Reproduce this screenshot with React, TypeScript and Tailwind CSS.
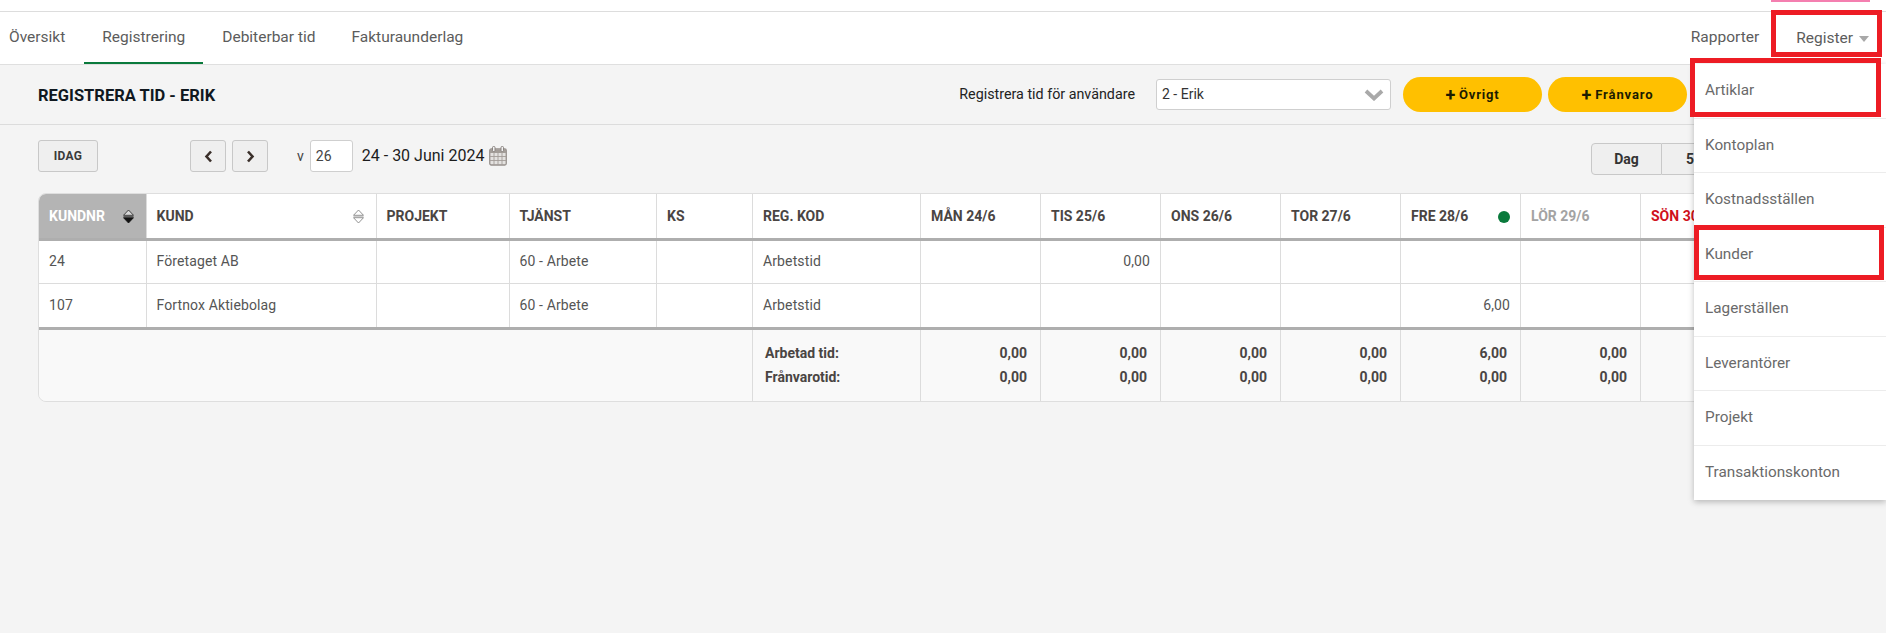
import React from "react";

const roboto = "font-['Roboto',sans-serif]";

function Sort({ active }: { active?: boolean }) {
  return (
    <svg width="11" height="15" viewBox="0 0 11 15" className="shrink-0">
      <path d="M5.5 1 L10.5 6.3 H0.5 Z" fill={active ? "#d8d8d8" : "#fff"} stroke={active ? "#222" : "#777"} strokeWidth="0.8" />
      <path d="M0.5 7.5 H10.5" stroke={active ? "#222" : "#aaa"} strokeWidth="0.6" />
      <path d="M5.5 14 L10.5 8.7 H0.5 Z" fill={active ? "#111" : "#fff"} stroke={active ? "#111" : "#777"} strokeWidth="0.8" />
    </svg>
  );
}

function Chevron({ dir }: { dir: "l" | "r" }) {
  return (
    <svg width="9" height="13" viewBox="0 0 9 13">
      <path d={dir === "l" ? "M7 1.5 L2.5 6.5 L7 11.5" : "M2 1.5 L6.5 6.5 L2 11.5"} fill="none" stroke="#3a2f2a" strokeWidth="2.6" />
    </svg>
  );
}

function Calendar() {
  return (
    <svg width="18" height="20" viewBox="0 0 18 20" className="ml-[5px]">
      <rect x="0.75" y="3" width="16.5" height="16" rx="1.5" fill="#e4e2e0" stroke="#96908c" strokeWidth="1.3" />
      <path d="M1 3.5H17V7H1Z" fill="#a39d98" />
      <path d="M1 10.5H17M1 14.5H17M5 7V19M9 7V19M13 7V19" stroke="#a39d98" strokeWidth="0.9" />
      <rect x="3.5" y="0.5" width="2.5" height="5" rx="1" fill="#f2f2f2" stroke="#8a8480" />
      <rect x="12" y="0.5" width="2.5" height="5" rx="1" fill="#f2f2f2" stroke="#8a8480" />
    </svg>
  );
}

const widths = [107, 230, 133, 147.5, 96, 168, 120, 120, 120, 120, 120, 120, 120, 88];

type Head = { t: string; c?: string };
const heads: Head[] = [
  { t: "REG. KOD" },
  { t: "MÅN 24/6" },
  { t: "TIS 25/6" },
  { t: "ONS 26/6" },
  { t: "TOR 27/6" },
  { t: "FRE 28/6" },
  { t: "LÖR 29/6", c: "text-[#a3a3a3]" },
  { t: "SÖN 30/6", c: "text-[#d0111b]" },
  { t: "" },
];

const th = "border-r border-[#dcdcdc] pl-[10px] pr-[10px] pt-[2px] text-left text-[14px] font-bold text-[#4a4543] font-['Roboto',sans-serif]";
const td = "border-r border-[#dcdcdc] px-[10px] text-[14px] tracking-[0.12px] text-[#555] font-normal";

const rows = [
  { nr: "24", kund: "Företaget AB", h: "h-[44px] border-b border-[#dcdcdc]", vals: ["", "0,00", "", "", "", "", "", ""] },
  { nr: "107", kund: "Fortnox Aktiebolag", h: "h-[45px]", vals: ["", "", "", "", "6,00", "", "", ""] },
];

const totals = [
  ["0,00", "0,00"],
  ["0,00", "0,00"],
  ["0,00", "0,00"],
  ["0,00", "0,00"],
  ["6,00", "0,00"],
  ["0,00", "0,00"],
  ["0,00", "0,00"],
  ["0,00", "0,00"],
];

const menu = ["Artiklar", "Kontoplan", "Kostnadsställen", "Kunder", "Lagerställen", "Leverantörer", "Projekt", "Transaktionskonton"];

export default function App() {
  return (
    <div className={`relative h-[633px] w-[1886px] overflow-hidden bg-[#f4f4f4] ${roboto}`}>
      {/* top strip */}
      <div className="h-[12px] border-b border-[#dddddd] bg-white" />

      {/* nav */}
      <div className="flex h-[53px] items-center justify-between border-b border-[#dfdfdf] bg-white pr-[17px] text-[15.5px] text-[#5c5c5c]">
        <div className="flex h-full items-stretch">
          <div className="flex items-center pl-[9px] pr-[19px]">Översikt</div>
          <div className="flex w-[119px] items-center justify-center border-b-2 border-[#0a7a3c] pt-[2px]">Registrering</div>
          <div className="flex items-center pl-[19px] pr-[18px]">Debiterbar tid</div>
          <div className="flex items-center pl-[18px]">Fakturaunderlag</div>
        </div>
        <div className="flex items-center">
          <span className="mr-[37px]">Rapporter</span>
          <span className="flex items-center gap-[6px] pt-[1px]">
            Register
            <span className="h-0 w-0 border-x-[5px] border-t-[6px] border-x-transparent border-t-[#a8a8a8]" />
          </span>
        </div>
      </div>

      {/* title bar */}
      <div className="flex h-[60px] items-center justify-between border-b border-[#dcdcdc] pl-[38px]">
        <h1 className="pt-[3px] text-[16.5px] font-bold text-[#10181f]">REGISTRERA TID - ERIK</h1>
        <div className="mr-[199px] flex items-center">
          <span className="mr-[21px] text-[14.3px] text-[#222]">Registrera tid för användare</span>
          <div className="mr-[12px] flex h-[31px] w-[235px] items-center justify-between rounded-[3px] border border-[#cfcfcf] bg-white pl-[5px] pr-[6px] text-[14px] text-[#333]">
            <span>2 - Erik</span>
            <svg width="20" height="12" viewBox="0 0 20 12">
              <path d="M2 2 L10 9.5 L18 2" fill="none" stroke="#a9a9a9" strokeWidth="3.8" />
            </svg>
          </div>
          <button className="mr-[6px] flex h-[35px] w-[139px] items-center justify-center gap-[3px] rounded-full bg-[#ffc000] text-[13px] font-bold tracking-[0.8px] text-[#1c1c00]">
            <span className="text-[18px] leading-none">+</span>Övrigt
          </button>
          <button className="flex h-[35px] w-[139px] items-center justify-center gap-[3px] rounded-full bg-[#ffc000] text-[13px] font-bold tracking-[0.9px] text-[#1c1c00]">
            <span className="text-[18px] leading-none">+</span>Frånvaro
          </button>
        </div>
      </div>

      {/* toolbar */}
      <div className="flex h-[68px] items-start justify-between pl-[38px] pt-[15px]">
        <div className="flex items-center">
          <button className="mr-[92px] h-[32px] w-[60px] rounded-[3px] border border-[#c8c8c8] bg-[#efefef] text-[12px] font-bold tracking-[0.3px] text-[#3a3a3a]">IDAG</button>
          <button className="mr-[6px] flex h-[32px] w-[36px] items-center justify-center rounded-[3px] border border-[#c8c8c8] bg-[#efefef]"><Chevron dir="l" /></button>
          <button className="mr-[29px] flex h-[32px] w-[36px] items-center justify-center rounded-[3px] border border-[#c8c8c8] bg-[#efefef]"><Chevron dir="r" /></button>
          <span className="mr-[6px] text-[14px] text-[#444]">v</span>
          <div className="mr-[9px] flex h-[32px] w-[43px] items-center rounded-[3px] border border-[#cfcfcf] bg-white pl-[5px] text-[14px] text-[#444]">26</div>
          <span className="text-[16px] text-[#1c1c1c]">24 - 30 Juni 2024</span>
          <Calendar />
        </div>
        <div className="mt-[3px] flex h-[32px]">
          <button className="h-full w-[71px] rounded-l-[4px] border border-[#c8c8c8] bg-[#efefef] text-[14px] font-bold text-[#333]">Dag</button>
          <button className="h-full w-[224px] border-y border-r border-[#c8c8c8] bg-[#efefef] pl-[24px] text-left text-[14px] font-bold text-[#333]">5 dagar</button>
        </div>
      </div>

      {/* table */}
      <div className="ml-[38px] w-[1810px] overflow-hidden rounded-[8px] border-x border-y border-[#dedede]">
        <table className="w-[1808px] table-fixed border-collapse">
          <colgroup>
            {widths.map((w, i) => (
              <col key={i} style={{ width: w }} />
            ))}
          </colgroup>
          <thead>
            <tr className="h-[45px] border-b-[3px] border-[#aeaeae] bg-white">
              <th className={`${th} bg-[#b4b4b4] !text-white`}>
                <div className="flex items-center justify-between pr-[2px]">KUNDNR<Sort active /></div>
              </th>
              <th className={th}>
                <div className="flex items-center justify-between pr-[2px]">KUND<Sort /></div>
              </th>
              <th className={th}>PROJEKT</th>
              <th className={th}>TJÄNST</th>
              <th className={th}>KS</th>
              {heads.map((h, i) => (
                <th key={i} className={`${th} ${h.c ?? ""}`}>
                  {h.t === "FRE 28/6" ? (
                    <div className="flex items-center justify-between">
                      {h.t}
                      <span className="h-[12px] w-[12px] rounded-full bg-[#0a7a3c]" />
                    </div>
                  ) : (
                    h.t
                  )}
                </th>
              ))}
            </tr>
          </thead>
          <tbody>
            {rows.map((r) => (
              <tr key={r.nr} className={`${r.h} bg-white`}>
                <td className={td}>{r.nr}</td>
                <td className={td}>{r.kund}</td>
                <td className={td} />
                <td className={td}>60 - Arbete</td>
                <td className={td} />
                <td className={td}>Arbetstid</td>
                {r.vals.map((v, i) => (
                  <td key={i} className={`${td} text-right`}>{v}</td>
                ))}
                <td className={td} />
              </tr>
            ))}
            <tr className="h-[73px] border-t-[3px] border-[#aeaeae] bg-[#f9f9f9]">
              <td colSpan={5} className="border-r border-[#dcdcdc]" />
              <td className="border-r border-[#dcdcdc] pl-[12px] text-[14px] font-bold leading-[24px] text-[#4a4543]">
                <div>Arbetad tid:</div>
                <div>Frånvarotid:</div>
              </td>
              {totals.map((t, i) => (
                <td key={i} className="border-r border-[#dcdcdc] pr-[13px] text-right text-[14px] font-bold leading-[24px] text-[#4a4543]">
                  <div>{t[0]}</div>
                  <div>{t[1]}</div>
                </td>
              ))}
              <td />
            </tr>
          </tbody>
        </table>
      </div>

      {/* dropdown menu */}
      <div className="absolute left-[1694px] top-[64px] w-[192px] bg-white text-[15.3px] text-[#6a6a6a] shadow-[0_2px_6px_rgba(0,0,0,0.25)]">
        {menu.map((m, i) => (
          <div key={m} className={`flex h-[54.5px] items-center pl-[11px] ${i < menu.length - 1 ? "border-b border-[#ececec]" : ""}`}>
            {m}
          </div>
        ))}
      </div>

      {/* annotations */}
      <div className="absolute left-[1771px] top-0 h-[2px] w-[99px] bg-[#f47fb0]" />
      <div className="absolute left-[1771px] top-[10px] h-[47px] w-[111px] border-[5px] border-[#ed1c24]" />
      <div className="absolute left-[1690px] top-[58px] h-[59px] w-[191px] border-[5px] border-[#ed1c24]" />
      <div className="absolute left-[1694px] top-[225px] h-[55px] w-[190px] border-[5px] border-[#ed1c24]" />
    </div>
  );
}
